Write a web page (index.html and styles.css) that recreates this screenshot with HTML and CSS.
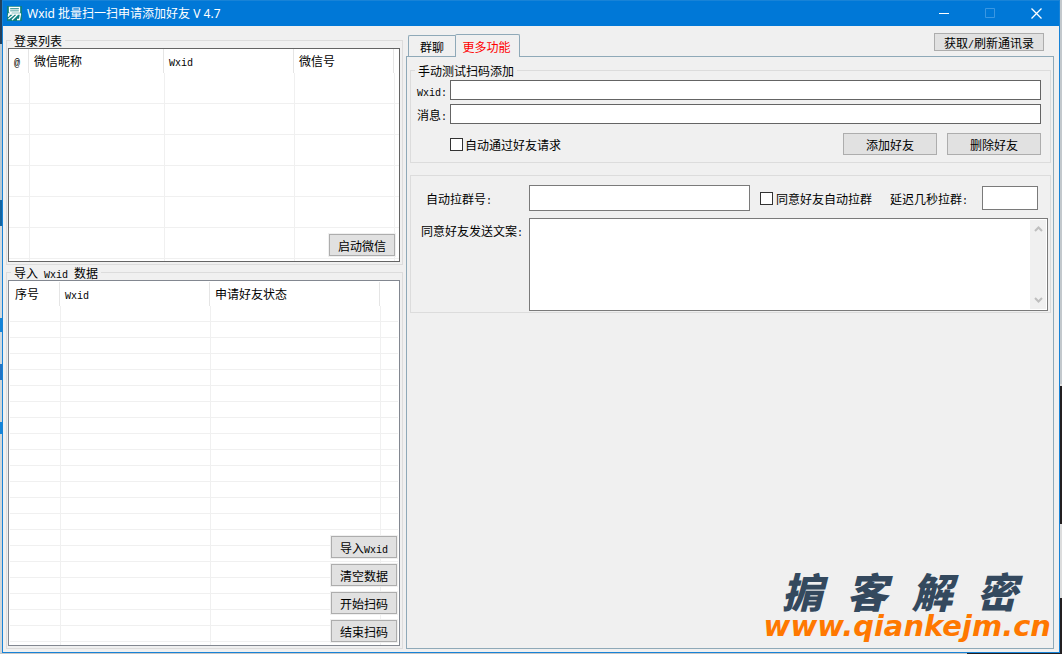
FILE: index.html
```html
<!DOCTYPE html>
<html lang="zh-CN">
<head>
<meta charset="utf-8">
<title>Wxid 批量扫一扫申请添加好友 V 4.7</title>
<link rel="stylesheet" href="styles.css">
</head>
<body>
<div class="window">
  <header class="titlebar">
    <svg class="app-icon" viewBox="0 0 15 15" width="15" height="15" aria-hidden="true">
      <rect width="15" height="15" fill="#0e8080"/>
      <path d="M2.500 1.500h10v4.500h-10zM2.500 3.800h10M1 8h13M13.500 8l-1 5.500h-2.500M4.500 6L1 10.500M7 8.500L1.500 13M10.500 8.500L5 14" fill="none" stroke="#fff" stroke-width="1.300"/>
    </svg>
    <h1 class="title">Wxid 批量扫一扫申请添加好友 V 4.7</h1>
    <div class="window-controls">
      <button class="control" type="button" aria-label="最小化"><svg width="11" height="11" viewBox="0 0 11 11"><path d="M0 5.500h10" stroke="#fff"/></svg></button>
      <button class="control" type="button" aria-label="最大化" disabled><svg width="11" height="11" viewBox="0 0 11 11"><path d="M.5 .5h9v9h-9z" fill="none" stroke="#3a97e2"/></svg></button>
      <button class="control" type="button" aria-label="关闭"><svg width="11" height="11" viewBox="0 0 11 11"><path d="M.5 .5l10 10M10.500 .5l-10 10" stroke="#fff" stroke-width="1.300"/></svg></button>
    </div>
  </header>
  <main class="content">
    <div class="lists">
      <fieldset class="group">
        <legend>登录列表</legend>
        <div class="list list-login">
          <table class="grid grid-login">
            <colgroup><col class="w20"><col class="w135"><col class="w130"><col class="w100"><col></colgroup>
            <thead><tr><th><span class="latin">@</span></th><th>微信昵称</th><th><span class="latin">Wxid</span></th><th>微信号</th><th></th></tr></thead>
            <tbody>
              <tr><td></td><td></td><td></td><td></td><td></td></tr>
              <tr><td></td><td></td><td></td><td></td><td></td></tr>
              <tr><td></td><td></td><td></td><td></td><td></td></tr>
              <tr><td></td><td></td><td></td><td></td><td></td></tr>
              <tr><td></td><td></td><td></td><td></td><td></td></tr>
              <tr><td></td><td></td><td></td><td></td><td></td></tr>
              <tr class="rest"><td></td><td></td><td></td><td></td><td></td></tr>
            </tbody>
          </table>
          <div class="list-actions"><button class="btn" type="button">启动微信</button></div>
        </div>
      </fieldset>
      <fieldset class="group group-fill">
        <legend>导入<span class="latin"> Wxid </span>数据</legend>
        <div class="list list-data">
          <table class="grid grid-data">
            <colgroup><col class="w50"><col class="w150"><col class="w170"><col></colgroup>
            <thead><tr><th>序号</th><th><span class="latin">Wxid</span></th><th>申请好友状态</th><th></th></tr></thead>
            <tbody>
              <tr><td></td><td></td><td></td><td></td></tr>
              <tr><td></td><td></td><td></td><td></td></tr>
              <tr><td></td><td></td><td></td><td></td></tr>
              <tr><td></td><td></td><td></td><td></td></tr>
              <tr><td></td><td></td><td></td><td></td></tr>
              <tr><td></td><td></td><td></td><td></td></tr>
              <tr><td></td><td></td><td></td><td></td></tr>
              <tr><td></td><td></td><td></td><td></td></tr>
              <tr><td></td><td></td><td></td><td></td></tr>
              <tr><td></td><td></td><td></td><td></td></tr>
              <tr><td></td><td></td><td></td><td></td></tr>
              <tr><td></td><td></td><td></td><td></td></tr>
              <tr><td></td><td></td><td></td><td></td></tr>
              <tr><td></td><td></td><td></td><td></td></tr>
              <tr><td></td><td></td><td></td><td></td></tr>
              <tr><td></td><td></td><td></td><td></td></tr>
              <tr><td></td><td></td><td></td><td></td></tr>
              <tr><td></td><td></td><td></td><td></td></tr>
              <tr><td></td><td></td><td></td><td></td></tr>
              <tr><td></td><td></td><td></td><td></td></tr>
              <tr><td></td><td></td><td></td><td></td></tr>
              <tr class="rest"><td></td><td></td><td></td><td></td></tr>
            </tbody>
          </table>
          <div class="list-actions">
            <button class="btn" type="button">导入<span class="latin">Wxid</span></button>
            <button class="btn" type="button">清空数据</button>
            <button class="btn" type="button">开始扫码</button>
            <button class="btn" type="button">结束扫码</button>
          </div>
        </div>
      </fieldset>
    </div>
    <div class="tabs">
      <div class="tab-row">
        <div class="tab-list" role="tablist">
          <button class="tab" type="button" role="tab" aria-selected="false">群聊</button>
          <button class="tab tab-active" type="button" role="tab" aria-selected="true">更多功能</button>
        </div>
        <button class="btn btn-refresh" type="button">获取<span class="latin">/</span>刷新通讯录</button>
      </div>
      <div class="panel">
        <fieldset class="group test-group">
          <legend>手动测试扫码添加</legend>
          <div class="field">
            <label for="wxid"><span class="latin">Wxid:</span></label>
            <input class="box" id="wxid" type="text">
          </div>
          <div class="field">
            <label for="message">消息<span class="latin">:</span></label>
            <input class="box" id="message" type="text">
          </div>
          <div class="test-actions">
            <label class="check"><input type="checkbox">自动通过好友请求</label>
            <div class="btn-row">
              <button class="btn btn-wide" type="button">添加好友</button>
              <button class="btn btn-wide" type="button">删除好友</button>
            </div>
          </div>
        </fieldset>
        <section class="auto-group">
          <div class="auto-row">
            <label class="auto-label" for="group-no">自动拉群号<span class="latin">:</span></label>
            <input class="box box-group" id="group-no" type="text">
            <label class="check check-agree"><input type="checkbox">同意好友自动拉群</label>
            <label class="delay-label" for="delay">延迟几秒拉群<span class="latin">:</span></label>
            <input class="box box-delay" id="delay" type="text">
          </div>
          <div class="copy-row">
            <label class="copy-label" for="copy">同意好友发送文案<span class="latin">:</span></label>
            <div class="copy-box">
              <textarea id="copy"></textarea>
              <div class="scrollbar" aria-hidden="true">
                <svg width="9" height="8" viewBox="0 0 9 8"><path d="M1 6l3.500-3.500L8 6" fill="none" stroke="#bfbfbf" stroke-width="2"/></svg>
                <svg width="9" height="8" viewBox="0 0 9 8"><path d="M1 2l3.500 3.500L8 2" fill="none" stroke="#bfbfbf" stroke-width="2"/></svg>
              </div>
            </div>
          </div>
        </section>
        <div class="watermark">
          <div class="mark-name"><span>掮</span><span>客</span><span>解</span><span>密</span></div>
          <div class="mark-url">www.qiankejm.cn</div>
        </div>
      </div>
    </div>
  </main>
</div>
</body>
</html>
```
FILE: styles.css
```css
* { box-sizing: border-box; }

body {
  margin: 0;
  min-height: 100vh;
  display: flex;
  padding: 0 2px 2px;
  background:
    linear-gradient(#c3c8cc 0 384px, #dcdcdc 384px 386px, #231f20 386px 524px, #dcdcdc 524px 598px, #231f20 598px) right / 2px 100% no-repeat,
    linear-gradient(90deg, #c8c8c8 0 967px, #231f20 967px) bottom / 100% 2px no-repeat,
    linear-gradient(#22405c 0 44px, #b9c8d2 44px 200px, #1464a0 200px 226px, #d5dade 226px 318px, #1484d8 318px 332px, #cfd8df 332px 364px, #2374c4 364px 380px, #d0d4d6 380px 422px, #1484d8 422px 434px, #d2d6d8 434px) left / 2px 100% no-repeat;
  color: #000;
  font: 12px/13px "Noto Sans CJK SC", sans-serif;
}

button, input, textarea { font: inherit; color: inherit; margin: 0; }

.latin {
  font-family: "Liberation Mono", monospace;
  font-size: 10px;
  line-height: 0;
  white-space: pre;
}

.window {
  flex: 1;
  display: flex;
  flex-direction: column;
  background: #f0f0f0;
  border: solid #1883d7;
  border-width: 0 1px 1px;
}

.titlebar {
  height: 26px;
  display: flex;
  align-items: center;
  gap: 5px;
  padding-left: 4px;
  background: #0078d7;
  border-top: 1px solid #1883d7;
  color: #fff;
}

.title {
  flex: 1;
  margin: 0;
  font: 12px/16px "Noto Sans", "Noto Sans CJK SC", sans-serif;
}

.window-controls { display: flex; }

.control {
  width: 46px;
  height: 25px;
  padding: 0;
  border: 0;
  background: none;
  display: grid;
  place-items: center;
}

.content {
  flex: 1;
  display: flex;
  gap: 3px;
  padding: 7px 5px 3px 3px;
}

.lists {
  width: 397px;
  display: flex;
  flex-direction: column;
  gap: 1px;
  padding-top: 1px;
}

.group {
  min-width: 0;
  margin: 0;
  padding: 1px 2px 2px 1px;
  border: 1px solid #dcdcdc;
}

.group legend {
  margin-left: 3px;
  padding: 0 3px;
}

.group-fill { flex: 1; }

.list {
  position: relative;
  background: #fff;
  border: 1px solid #646464;
}

.list-data {
  border-color: #828790;
  padding: 1px 1px 0;
}

.grid {
  width: 100%;
  table-layout: fixed;
  border-spacing: 0;
}

.grid th {
  height: 24px;
  padding: 0 0 2px 5px;
  border-right: 1px solid #e5e5e5;
  font-weight: normal;
  text-align: left;
  white-space: nowrap;
}

.grid th:last-child { border-right: 0; }

.grid td {
  padding: 0;
  border-bottom: 1px solid #f0f0f0;
}

.grid td + td { border-left: 1px solid #f0f0f0; }
.grid .rest td { border-bottom: 0; }
.grid-login td { height: 31px; }
.grid-login .rest td { height: 2px; }
.grid-data td { height: 16px; }
.grid-data .rest td { height: 3px; }

.w20 { width: 20px; }
.w50 { width: 50px; }
.w100 { width: 100px; }
.w130 { width: 130px; }
.w135 { width: 135px; }
.w150 { width: 150px; }
.w170 { width: 170px; }

.list-actions {
  position: absolute;
  right: 2px;
  bottom: 3px;
  display: flex;
  flex-direction: column;
  gap: 6px;
}

.list-login .list-actions { right: 4px; bottom: 5px; }

.btn {
  width: 66px;
  height: 22px;
  padding: 0;
  border: 1px solid #adadad;
  background: #e1e1e1;
  box-shadow: 0 0 0 1px #f0f0f0;
  white-space: nowrap;
}

.btn-wide { width: 94px; }
.btn-refresh { width: 110px; height: 18px; margin-right: 10px; }

.tabs {
  flex: 1;
  min-width: 0;
  display: flex;
  flex-direction: column;
}

.tab-row {
  height: 23px;
  display: flex;
  justify-content: space-between;
  padding-left: 2px;
}

.tab-list { display: flex; align-items: flex-end; }

.tab {
  width: 47px;
  height: 21px;
  padding: 0;
  border: 1px solid #8fa9b8;
  border-width: 1px 0 0 1px;
  border-radius: 2px 0 0 0;
  background: #f0f0f0;
}

.tab-active {
  position: relative;
  z-index: 1;
  width: 65px;
  height: 23px;
  margin-bottom: -1px;
  padding-right: 2px;
  border-width: 1px 1px 0;
  border-radius: 2px 2px 0 0;
  color: #f00;
}

.panel {
  flex: 1;
  display: flex;
  flex-direction: column;
  padding: 7px 2px 2px 3px;
  border: 1px solid #8fa9b8;
}

.test-group {
  display: flex;
  flex-direction: column;
  padding: 3px 9px 7px 6px;
}

.test-group legend { margin-left: -2px; }

.field {
  display: flex;
  align-items: center;
  margin-bottom: 4px;
}

.field label { width: 33px; }

.box {
  min-width: 0;
  padding: 0 3px;
  border: 1px solid #646464;
  background: #fff;
}

.field .box { flex: 1; height: 20px; }

.test-actions {
  display: flex;
  align-items: center;
  justify-content: space-between;
  padding: 5px 0 0 33px;
}

.btn-row { display: flex; gap: 10px; }

.check { display: flex; align-items: center; gap: 2px; white-space: nowrap; }

.check input {
  appearance: none;
  width: 13px;
  height: 13px;
  border: 1px solid #333;
  background: #fff;
}

.auto-group {
  margin-top: 12px;
  padding: 9px 2px 1px 10px;
  border: 1px solid #dcdcdc;
}

.auto-row {
  display: flex;
  align-items: center;
  padding: 0 10px 0 5px;
}

.auto-label { width: 103px; }
.box-group { flex: 1; height: 26px; border-color: #7a7a7a; }
.check-agree { margin: 0 18px 0 10px; gap: 3px; }
.delay-label { width: 92px; }
.box-delay { width: 56px; height: 24px; border-color: #7a7a7a; }

.copy-row { display: flex; margin-top: 7px; }
.copy-label { width: 108px; padding-top: 6px; white-space: nowrap; }

.copy-box { position: relative; flex: 1; display: flex; }

.copy-box textarea {
  width: 100%;
  height: 93px;
  padding: 3px 20px 3px 3px;
  border: 1px solid #7a7a7a;
  background: #fff;
  resize: none;
}

.scrollbar {
  position: absolute;
  top: 2px;
  right: 2px;
  bottom: 2px;
  width: 16px;
  display: flex;
  flex-direction: column;
  justify-content: space-between;
  align-items: center;
  padding: 5px 0;
  background: #f0f0f0;
}

.watermark {
  align-self: flex-end;
  margin-top: auto;
  padding-bottom: 3px;
  font-style: italic;
}

.mark-name {
  display: flex;
  gap: 24px;
  padding-left: 18px;
  color: #34495e;
  font-weight: 900;
  font-size: 41px;
  line-height: 38px;
}

.mark-url {
  color: #ff7800;
  font: italic 700 29px/34px "DejaVu Sans", sans-serif;
}
```
